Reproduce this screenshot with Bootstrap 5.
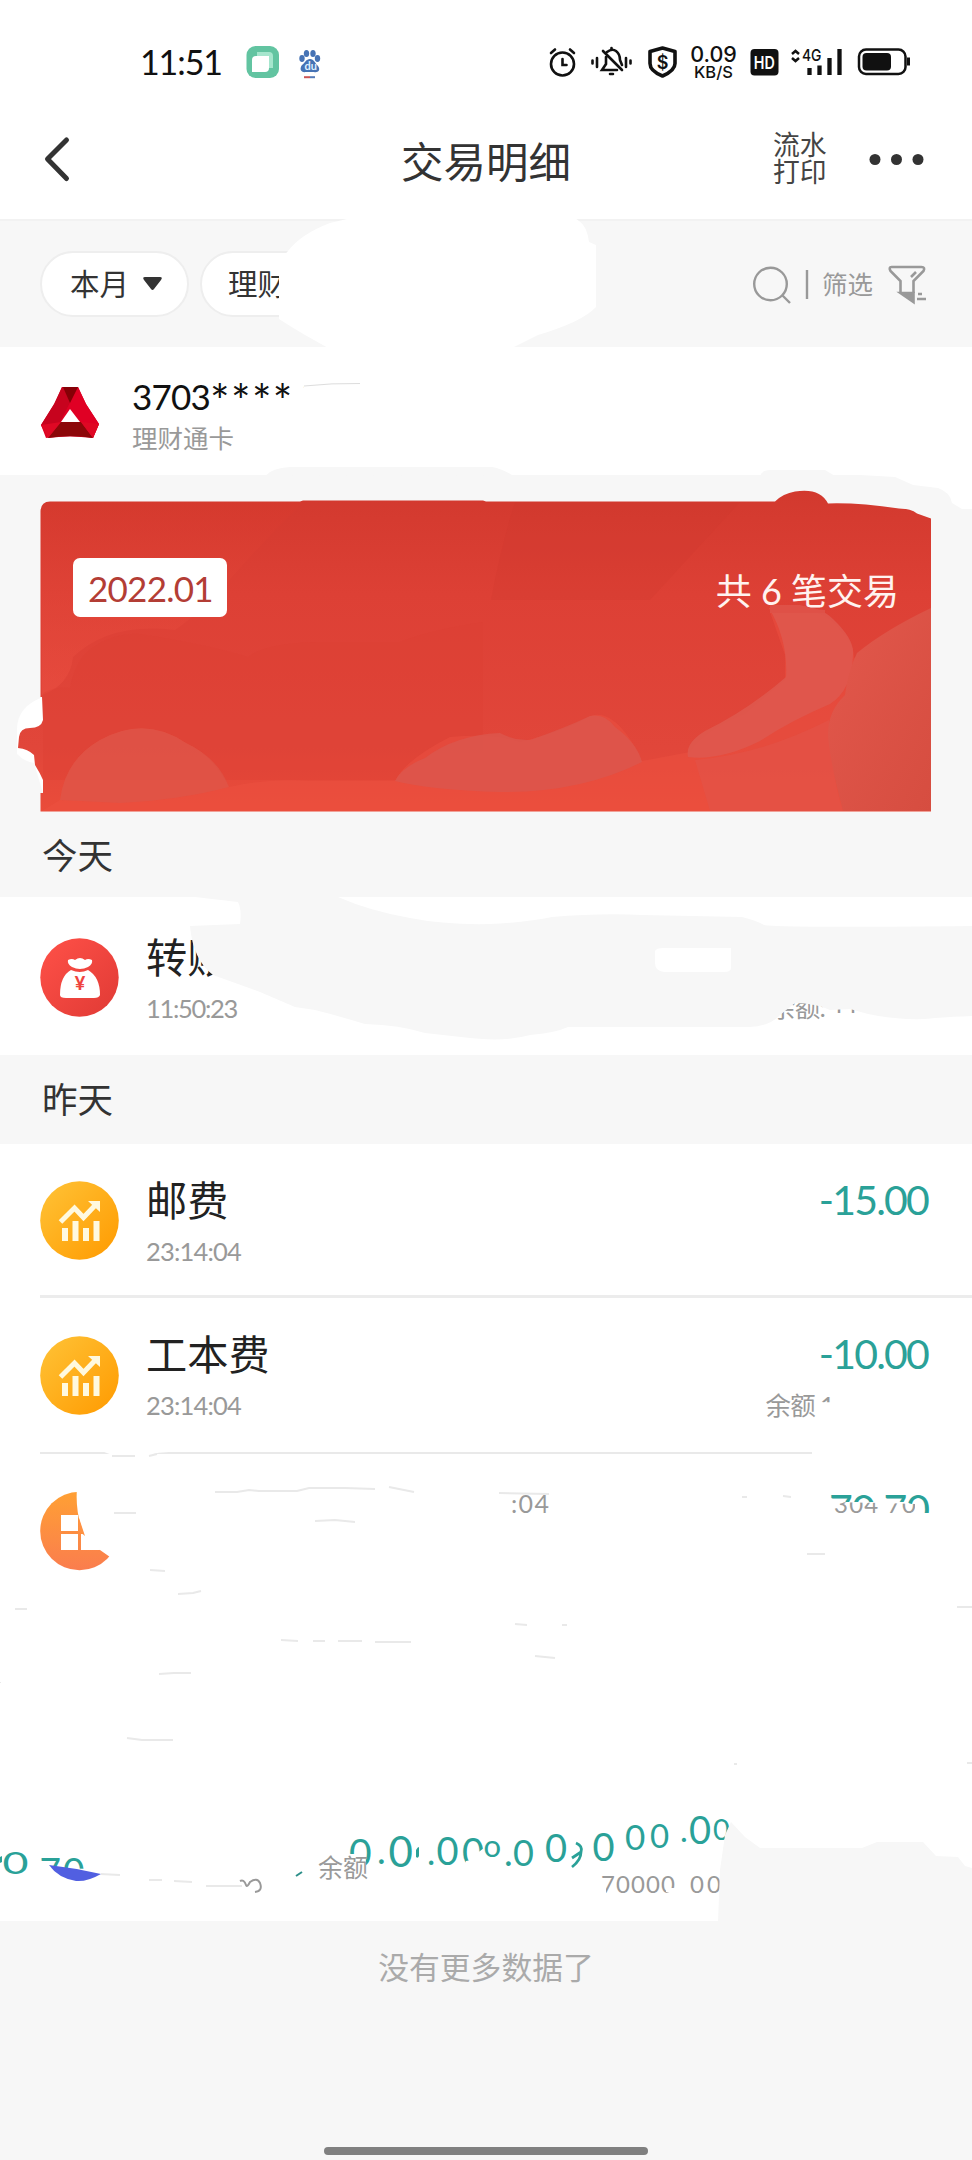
<!DOCTYPE html>
<html lang="zh-CN">
<head>
<meta charset="utf-8">
<meta name="viewport" content="width=device-width, initial-scale=1">
<title>交易明细</title>
<link href="https://cdn.jsdelivr.net/npm/bootstrap@5.3.0/dist/css/bootstrap.min.css" rel="stylesheet">
<style>
body{font-family:Lato,"Noto Sans CJK SC",sans-serif;background:#f7f7f7;color:#222;line-height:1.2}
svg{display:block;flex:none}
.screen{width:972px;height:2160px;overflow:hidden}
.over{position:absolute;left:0;top:0;overflow:visible;pointer-events:none}
.statusbar{height:125px;padding-top:38px}
.clock{width:239px;padding-left:140px;font-size:34px;line-height:48px;letter-spacing:-1.1px;color:#111}
.speed{width:57px;text-align:center;color:#111;font-family:Inter,sans-serif;padding-top:7px}
.speed-n{font-size:21.5px;line-height:18px;font-weight:500}
.speed-u{font-size:16.5px;line-height:18px;font-weight:500}
.titlebar{height:94px}
.side{width:300px}
.title{font-size:42.5px;line-height:70px;color:#333;padding-top:2px}
.print{width:60px;font-size:26.8px;line-height:27px;color:#444;padding-top:7px;margin-left:101px}
.filters{height:128px;border-top:2px solid #f2f2f2;padding-left:40px}
.pill{height:66px;border:2px solid #eee;border-radius:33px;font-size:29.5px;color:#333;padding-left:28px}
.pill-a{width:149px}.pill-b{width:149px;margin-left:11px;padding-left:26px}
.hint{font-size:25.5px;color:#999}
.account{height:128px;padding:20px 0 0 40px}
.acc-text{padding:7px 0 0 32px}
.acc-no{font-size:35px;line-height:44px;color:#111;letter-spacing:-.8px}
.stars{font-size:46px;line-height:0;letter-spacing:1.4px;vertical-align:-8px}
.acc-name{font-size:25.5px;line-height:34px;color:#999;margin-top:3px}
.summary-wrap{height:337px;padding:26px 41px 0 40px}
.summary{height:311px;padding:57px 32px 0 33px}
.month{width:154px;height:59px;border-radius:7px;font-size:35px;line-height:61px;letter-spacing:-.75px;color:#b33d35;padding-left:15px}
.count{font-size:36px;line-height:60px;color:#fff3f0;padding-top:3px}
.day{font-size:35.5px;color:#333;padding-left:42px}
.day-a{height:85px;padding-top:3px}.day-b{height:89px;padding-top:1px}
.first{height:158px}
.entry{padding:31px 42px 0 40px}
.entry-text{padding-left:26px}
.entry-name{font-size:41.2px;line-height:50px;color:#222}
.entry-time{font-size:25.5px;line-height:34px;color:#999;margin-top:9px;letter-spacing:-.8px}
.amount{font-size:41px;line-height:50px;color:#2aa198;letter-spacing:-1.8px;margin-right:2px}
.half{display:inline-block;clip-path:inset(0 0 58% 0);margin-left:5px}
.rule{height:3px;background:#ececec;margin-left:40px}
.rest{height:467px}
.foot{height:239px;padding-top:27px;font-size:30.8px;line-height:40px;color:#aaa}
.homebar{left:324px;top:2147px;width:324px;height:8px;border-radius:4px;background:#808080}
.teal{fill:#2aa198;font-family:Lato,sans-serif}
.grey{fill:#999;font-family:Lato,"Noto Sans CJK SC",sans-serif}
.scratch{fill:none;stroke:#e9e9e9;stroke-width:2}
</style>
</head>
<body>
<main class="screen position-relative">

<header class="bg-white">
  <div class="statusbar d-flex">
    <div class="clock">11:51</div>
    <svg width="100" height="50" viewBox="239 38 100 50">
      <rect x="246.500" y="46" width="32.500" height="32" rx="9" fill="#62c4a1"/>
      <path d="M257 52h12q4 0 4 4v12h-5V57h-11z" fill="#a5e6cd"/><path d="M256 56h13v12q0 4-4 4h-13V60q0-4 4-4z" fill="#fff"/>
      <g fill="#4673b5"><ellipse cx="302" cy="58.500" rx="2.700" ry="3.400"/><ellipse cx="306.500" cy="53.500" rx="2.700" ry="3.600"/><ellipse cx="313" cy="53.500" rx="2.700" ry="3.600"/><ellipse cx="317.500" cy="58.500" rx="2.700" ry="3.400"/><path d="M310 59c4 0 5 4 8 7 3 4 0 7-4 6h-8c-5 1-7-3-4-7 3-2 4-6 8-6z"/></g>
      <text x="304.500" y="70" font-size="11" font-weight="700" fill="#dff0ff">du</text>
      <path d="M304 77.200h6" stroke="#c55" stroke-width="2"/><path d="M310 77.200h5" stroke="#557bb8" stroke-width="2"/>
    </svg>
    <svg class="ms-auto" width="40" height="50" viewBox="545 38 40 50" fill="none" stroke="#111" stroke-width="2.600" stroke-linecap="round"><circle cx="562.500" cy="64" r="11.500"/><path d="M562.500 59v6h4M551 53l4-3.500M574 53l-4-3.500"/></svg>
    <svg width="55" height="50" viewBox="585 38 55 50" fill="none" stroke="#111" stroke-width="2.600" stroke-linecap="round"><path d="M592.500 60.500v3M597 58v9M626 58v9M630.500 60.500v3M603 51l19 19M606 57v7l-4 6h15M607 52q5-4 9-1 4 3 4 9l2 5"/><path d="M611.500 49v-1M610 74h3"/></svg>
    <svg width="45" height="50" viewBox="640 38 45 50"><path d="M662.500 48l12.500 3.500v12q0 7-12.500 12.500q-12.500-5-12.500-12.500v-12z" fill="none" stroke="#111" stroke-width="3.600" stroke-linejoin="round"/><text x="662.500" y="68.500" font-size="18" font-weight="600" text-anchor="middle" fill="#111" font-family="Inter">$</text></svg>
    <div class="speed"><div class="speed-n">0.09</div><div class="speed-u">KB/S</div></div>
    <svg width="43" height="50" viewBox="742 38 43 50"><rect x="750.500" y="49" width="28" height="26.500" rx="4" fill="#111"/><text x="764.300" y="68.500" font-size="17.500" font-weight="600" text-anchor="middle" textLength="21" lengthAdjust="spacingAndGlyphs" fill="#fff" font-family="Inter">HD</text></svg>
    <svg width="65" height="50" viewBox="785 38 65 50"><path d="M792 54l3.500-3 3.500 3M792 58l3.500 3 3.500-3" fill="none" stroke="#111" stroke-width="2.500"/><text x="802" y="61" font-size="16.500" font-weight="500" textLength="19.500" lengthAdjust="spacingAndGlyphs" fill="#111" font-family="Inter">4G</text><path d="M809.500 68v7M819.500 65.500V75M829.500 58v17M839.500 49v26" stroke="#111" stroke-width="4.300"/></svg>
    <svg width="122" height="50" viewBox="850 38 122 50"><rect x="859" y="49.500" width="46.500" height="24.500" rx="7" fill="none" stroke="#111" stroke-width="2.500"/><rect x="862.500" y="53" width="28.500" height="17.500" rx="4" fill="#111"/><path d="M908.500 57.500v8" stroke="#111" stroke-width="3"/></svg>
  </div>
  <div class="titlebar d-flex">
    <div class="side flex-shrink-0"><svg width="100" height="70" viewBox="0 125 100 70"><path d="M66.500 140L47.500 159L66.500 178.500" fill="none" stroke="#333" stroke-width="5" stroke-linecap="round" stroke-linejoin="round"/></svg></div>
    <div class="title flex-grow-1 text-center">交易明细</div>
    <div class="side flex-shrink-0 d-flex"><div class="print">流水<br>打印</div>
      <svg width="139" height="70" viewBox="833 125 139 70" fill="#333"><circle cx="875" cy="159.500" r="5.500"/><circle cx="896.500" cy="159.500" r="5.500"/><circle cx="918" cy="159.500" r="5.500"/></svg></div>
  </div>
</header>

<section class="filters d-flex align-items-center position-relative">
  <div class="pill pill-a bg-white d-flex align-items-center">本月<svg style="margin-left:13px" width="22" height="16" viewBox="0 0 22 16"><path d="M3 1h15q3 0 1 3l-7 9q-1.500 2-3 0L2 4Q0 1 3 1z" fill="#333"/></svg></div>
  <div class="pill pill-b bg-white d-flex align-items-center">理财</div>
  <svg class="over" width="972" height="128" viewBox="0 220 972 128" fill="#fff"><path d="M347 218L330 222Q301 233 288 250Q277 262 279 272V318Q293 327 305 334L330 348H510L538 334Q582 321 596 306V244L589 241Q587 225 579 220L575 217z"/></svg>
  <svg class="ms-auto" width="70" height="60" viewBox="744 253 70 60" fill="none" stroke="#999" stroke-width="2.400"><circle cx="769.500" cy="283" r="16.300"/><path d="M781 294l8 8M806 269v29"/></svg>
  <span class="hint ms-1" style="padding-left:3px;margin-right:1px">筛选</span>
  <svg width="98" height="60" viewBox="874 253 98 60" fill="none" stroke="#999" stroke-width="2.600"><path d="M900.500 292v-12l-10-10q-2-4 1-4h30q4 0 2 4l-10 10v12M911 276l5-5M918 293h4M917 298h9"/><path d="M900.500 292h13v9z" fill="#999"/></svg>
</section>

<section class="account bg-white position-relative">
  <div class="d-flex">
    <svg class="mt-3" width="60" height="60" viewBox="40 382 60 60"><path d="M62 386h16l8 17 13 20-6 14-23-5-24 5-5-13 14-22z" fill="#e00024"/><path d="M62 386h16L60 421l14 0 19 16q-24-3-45 0l-7-13 13-21z" fill="#c7031e"/><path d="M78 386l8 17 13 20-6 14-12-16-11-19z" fill="#e00024"/><path d="M63 386h15l-8 16z" fill="#850006"/><path d="M61 421h20l12 16q-22-4-45 0z" fill="#8c0709"/><path d="M41 424l20-3-13 16zM81 421l18 2-6 14z" fill="#df0824"/><path d="M70 408l10 13H61z" fill="#fff"/></svg>
    <div class="acc-text"><div class="acc-no">3703<span class="stars">****</span>67</div><div class="acc-name">理财通卡</div></div>
  </div>
  <svg class="over" width="972" height="128" viewBox="0 347 972 128"><path d="M281 408L289 395Q296 388 304 387V376H374V412H281z" fill="#fff"/><path d="M304 386q28-3 56-2.500" stroke="#ddd" fill="none"/></svg>
</section>

<section class="summary-wrap position-relative">
  <svg class="over" width="972" height="337" viewBox="0 475 972 337">
    <defs>
      <linearGradient id="cardRed" x1="0" y1="0" x2="0" y2="1"><stop offset="0" stop-color="#d2392e"/><stop offset=".32" stop-color="#dd4035"/><stop offset=".8" stop-color="#e1463a"/><stop offset="1" stop-color="#ea4c3a"/></linearGradient>
      <linearGradient id="waveRed" x1="0" y1="0" x2="1" y2="1"><stop offset="0" stop-color="#e2584c"/><stop offset="1" stop-color="#d64d40"/></linearGradient>
      <linearGradient id="topFade" x1="0" y1="0" x2="0" y2="1"><stop offset="0" stop-color="#d7392d"/><stop offset="1" stop-color="#ee5244"/></linearGradient>
    </defs>
    <path d="M265 476Q272 468 290 467H492Q500 468 512 475z" fill="#f7f7f7"/>
    <path d="M725 475h35q2-6 10-6h55l10 5q30 1 60 3l18 8 25 3q12 4 14 15l10 6h10V470H840z" fill="#fff"/><path d="M725 476h35q2-6 10-6h55l10 6z" fill="#f7f7f7"/>
    <path d="M43 697Q18 706 17 728V754Q25 762 34 763L43 793z" fill="#fff"/>
    <path d="M40.500 811.500V793H43V780Q40 773 35 765L34 755Q28 749 18 748L19 737Q20 728 30 728Q41 728 43 720L42 697H40.500V511Q41 501.500 50 501.500H300l3-1H483l3 1H775q8-8 20-10q25-4 33 12q30-1 71 5q12 0 18 5l14 5V811.500z" fill="url(#cardRed)"/>
    <path d="M52 502H303Q260 545 231 578Q201 612 175 630Q110 622 73 657Q70 685 42 695V512z" fill="url(#topFade)" opacity=".45"/>
    <path d="M43 693Q58 686 70 688Q75 660 92 648Q115 632 140 634Q210 645 248 657Q265 643 318 642H400Q430 630 483 622V780H43z" fill="#dc4035" opacity=".35"/>
    <path d="M60 800Q65 760 100 740Q145 715 186 743Q213 755 229 787Q270 778 310 781H395Q405 760 450 737Q495 733 520 742Q565 731 590 716Q612 708 635 747L642 761L690 752Q705 730 745 714L785 680V655L770 612Q820 602 840 630Q855 645 854 658L930 610V811H42z" fill="#ee5342" opacity=".45"/>
    <path d="M60 800Q65 760 100 740Q145 715 186 743Q218 758 229 787Q180 800 120 803z" fill="#dd5549" opacity=".7"/>
    <path d="M395 781Q402 767 425 758Q455 735 500 733Q515 741 530 740Q565 728 590 716Q605 713 615 727Q637 743 642 762Q580 793 500 792Q430 790 395 781z" fill="#dc564c" opacity=".85"/>
    <path d="M769 608Q815 600 833 619Q855 640 853 655Q852 690 830 704Q790 721 760 741Q720 761 688 757Q685 743 705 731Q748 710 786 677Q788 640 769 608z" fill="#df584e" opacity=".9"/>
    <path d="M829 720Q832 780 843 811H710L695 760Q760 755 829 720z" fill="#e35347" opacity=".7"/>
    <path d="M931 608Q885 630 857 653Q848 671 845 695Q824 715 829 745Q833 775 843 811H931z" fill="url(#waveRed)"/>
    <path d="M515 502Q500 550 491 600L650 600L740 502z" fill="#cc382f" opacity=".2"/>
  </svg>
  <div class="summary d-flex justify-content-between position-relative">
    <div class="month bg-white">2022.01</div><div class="count">共 6 笔交易</div>
  </div>
  <svg class="over" width="972" height="337" viewBox="0 475 972 337"><path d="M770 605H800l15 4 10 1v3H770z" fill="#df5147"/></svg>
</section>

<div class="day day-a d-flex align-items-center">今天</div>
<section class="first bg-white position-relative">
  <div class="entry d-flex pt-0">
    <svg style="margin-top:40px" width="80" height="80" viewBox="40 937 80 80"><defs><linearGradient id="bagRed" x1="0" y1="0" x2="1" y2="1"><stop offset="0" stop-color="#ff5148"/><stop offset="1" stop-color="#e03a35"/></linearGradient></defs><circle cx="79.500" cy="977.500" r="39.200" fill="url(#bagRed)"/><path d="M68 960q4-2 7 0q5-4 10 0q3-2 7 0q1 4-4 7q-8 4-16 0q-5-3-4-7zM71 970q9 4 17 0q12 7 12 25q-1 3-6 3H66q-6 0-6-3q0-19 11-25z" fill="#fff"/><text x="80" y="990" font-size="18" font-weight="900" text-anchor="middle" fill="#ef443e">¥</text></svg>
    <div class="entry-text" style="margin-top:35px"><div class="entry-name">转账</div><div class="entry-time" style="letter-spacing:-1.300px">11:50:23</div></div>
    <div class="ms-auto text-end"><div class="entry-time" style="margin:93px 52px 0 0">余额: 11.7</div></div>
  </div>
  <svg class="over" width="972" height="158" viewBox="0 897 972 158"><path d="M828 1013h80v14h-80z" fill="#fff"/><path d="M195 897H338Q370 911 410 918Q445 925 490 924Q530 922 552 917Q600 913 642 915L742 917Q755 920 764 925Q780 928 972 926V1016Q945 1017 925 1019Q895 1020 868 1014L850 1009L830 1010Q815 1003 795 1003L780 1015Q770 1026 750 1027H568Q555 1033 530 1035Q505 1042 470 1038L425 1033Q400 1025 365 1024Q335 1015 315 1010L295 1007L260 992L213 975Q193 960 190 926L240 924Q242 910 238 902z" fill="#f7f7f7"/><path d="M655 951Q656 948 664 948H731V968Q731 972 724 972H664Q655 971 655 963z" fill="#fff"/></svg>
</section>
<div class="day day-b d-flex align-items-center">昨天</div>

<section class="bg-white">
  <div class="entry d-flex" style="height:151px">
    <svg class="mt-1" width="80" height="84" viewBox="40 1179 80 84"><defs><linearGradient id="gold" x1="0" y1="0" x2="1" y2="1"><stop offset="0" stop-color="#ffc337"/><stop offset="1" stop-color="#ff9a00"/></linearGradient><g id="chartIcon"><circle cx="79.500" cy="1220.500" r="39.300" fill="url(#gold)"/><path d="M60.500 1222l14-14 9 9.500 11-11.500" fill="none" stroke="#fff9df" stroke-width="5"/><path d="M88 1201h12v11z" fill="#fff9df"/><path d="M65 1228v13M75.500 1221v20M86 1228v13M96.500 1221v20" stroke="#fff9df" stroke-width="6"/></g></defs><use href="#chartIcon"/></svg>
    <div class="entry-text"><div class="entry-name">邮费</div><div class="entry-time">23:14:04</div></div>
    <div class="amount ms-auto">-15.00</div>
  </div>
  <div class="rule"></div>
  <div class="entry d-flex position-relative" style="height:156px">
    <svg style="margin-top:5px" width="80" height="84" viewBox="40 1179 80 84"><use href="#chartIcon"/></svg>
    <div class="entry-text"><div class="entry-name">工本费</div><div class="entry-time">23:14:04</div></div>
    <div class="ms-auto text-end"><div class="amount">-10.00</div><div class="entry-time" style="margin-right:96px">余额<span class="half">1</span></div></div>
    <svg class="over" width="972" height="156" viewBox="0 1298 972 156"><path class="scratch" d="M40 1453H104l8 3h23M149 1456q10-3 20-3H812"/></svg>
  </div>
</section>

<section class="rest position-relative">
  <svg class="over" width="972" height="467" viewBox="0 1454 972 467">
    <defs><linearGradient id="orange" x1="0" y1="0" x2="0" y2="1"><stop offset="0" stop-color="#ffa034"/><stop offset="1" stop-color="#fa7d4e"/></linearGradient>
      <clipPath id="tealTop"><path d="M825 1485h110v28h-15l-5-8-10-3h-80z"/></clipPath><clipPath id="greyLow"><path d="M825 1502l60 1 30 1v16h-90z"/></clipPath></defs>
    <path d="M0 1454H972V1921H0z" fill="#fff"/><path class="scratch" d="M112 1456h23M149 1456l8-2"/>
    <circle cx="79.500" cy="1531" r="39.300" fill="url(#orange)"/><path d="M61 1515h17v16H61zM61 1534h17v16H61zM81 1534h18v16H81z" fill="#fff"/><path d="M77 1488Q75 1512 84 1535L82 1549L100 1550L110 1557L125 1560V1488z" fill="#fff"/><path d="M79 1518l6 18-6-5z" fill="#ff9142"/>
    <g class="scratch"><path d="M215 1492h22l12-2 10 1h38l12-3h36l30 1M389 1487l25 5M315 1521l20-1 20 2M114 1513h22M150 1570l15 1M178 1594l15-1 8-2M15 1609h12M281 1640l17 1M313 1641h12M338 1641h24M375 1642h36M159 1674l15-1h17M127 1738l15 2h31M499 1493l50 1M515 1624l12 1M562 1625h5M535 1656l20 2M742 1497h5M783 1496l8 1M807 1554h18M957 1607h15M967 1763h5M734 1764h3M0 1682v1M100 1874l20 1M149 1880h13M174 1881l18 1M206 1886h36"/></g>
    <text class="grey" x="511" y="1513" font-size="25" textLength="38">:04</text>
    <g clip-path="url(#tealTop)"><text class="teal" x="829" y="1524" font-size="41" textLength="101">70 70</text></g>
    <g clip-path="url(#greyLow)"><text class="grey" x="834" y="1513" font-size="24" textLength="82">304 70</text></g>
    <g class="teal">
      <path d="M0 1857l2-1v6l-2 1z"/><text x="2.500" y="1874" font-size="31" textLength="26" lengthAdjust="spacingAndGlyphs">0</text>
      <text x="39.500" y="1884" font-size="37" textLength="45">70</text>
      <text x="349" y="1867" font-size="39">0</text><text x="377" y="1864" font-size="37">.</text><text x="388.500" y="1867" font-size="42">0</text><path d="M416 1850q3-5 3-2v8q-1 3-3 1z"/><text x="427" y="1865" font-size="35">.</text><text x="436.500" y="1865" font-size="38">0</text><text x="462" y="1866" font-size="38">0</text><text x="483.500" y="1857" font-size="31">o</text><text x="504" y="1866" font-size="37">.</text><text x="513" y="1866" font-size="36">0</text><text x="545" y="1862" font-size="38">0</text><text x="592.500" y="1861" font-size="38">0</text><text x="625" y="1850" font-size="35">0</text><text x="650" y="1848" font-size="33">0</text><text x="680" y="1842" font-size="33">.</text><text x="689" y="1844" font-size="38">0</text><text x="713" y="1840" font-size="29">0</text>
    </g>
    <path d="M345 1854h17l4 7v8h-20zM466 1861l10-2v-5l8-6v24h-20z" fill="#fff"/>
    <path d="M39 1868l62 1v20H39z" fill="#fff"/><path d="M49 1865Q75 1868 101 1874Q87 1882 76 1881Q58 1878 49 1865z" fill="#515fe1"/>
    <path d="M296 1876l6-4" stroke="#2c8f89" stroke-width="2"/><path d="M576 1843q7 3 5 9l-9 6M581 1852q0 8-9 15" fill="none" stroke="#2aa198" stroke-width="2.800"/>
    <path d="M240 1881q4-2 6 4q1 3 4-3q7-5 10 1q3 8-5 9" fill="none" stroke="#999" stroke-width="2"/>
    <text class="grey" x="318" y="1877" font-size="25">余额</text>
    <text class="grey" x="601" y="1893" font-size="24" textLength="74">70000</text><text class="grey" x="690" y="1893" font-size="24" textLength="31">00</text>
    <path d="M600 1885l6 3v7h-6zM666 1888h10v7l-10-3z" fill="#fff"/>
    <path d="M718 1922L720 1870L725 1835L731 1822L745 1837L760 1848H862L877 1842H923L936 1856L958 1857L965 1866L972 1868V1922z" fill="#f7f7f7"/>
  </svg>
</section>
<footer class="foot text-center">没有更多数据了</footer>
<div class="homebar position-absolute"></div>
</main>
<script src="https://cdn.jsdelivr.net/npm/bootstrap@5.3.0/dist/js/bootstrap.bundle.min.js"></script>
</body>
</html>
